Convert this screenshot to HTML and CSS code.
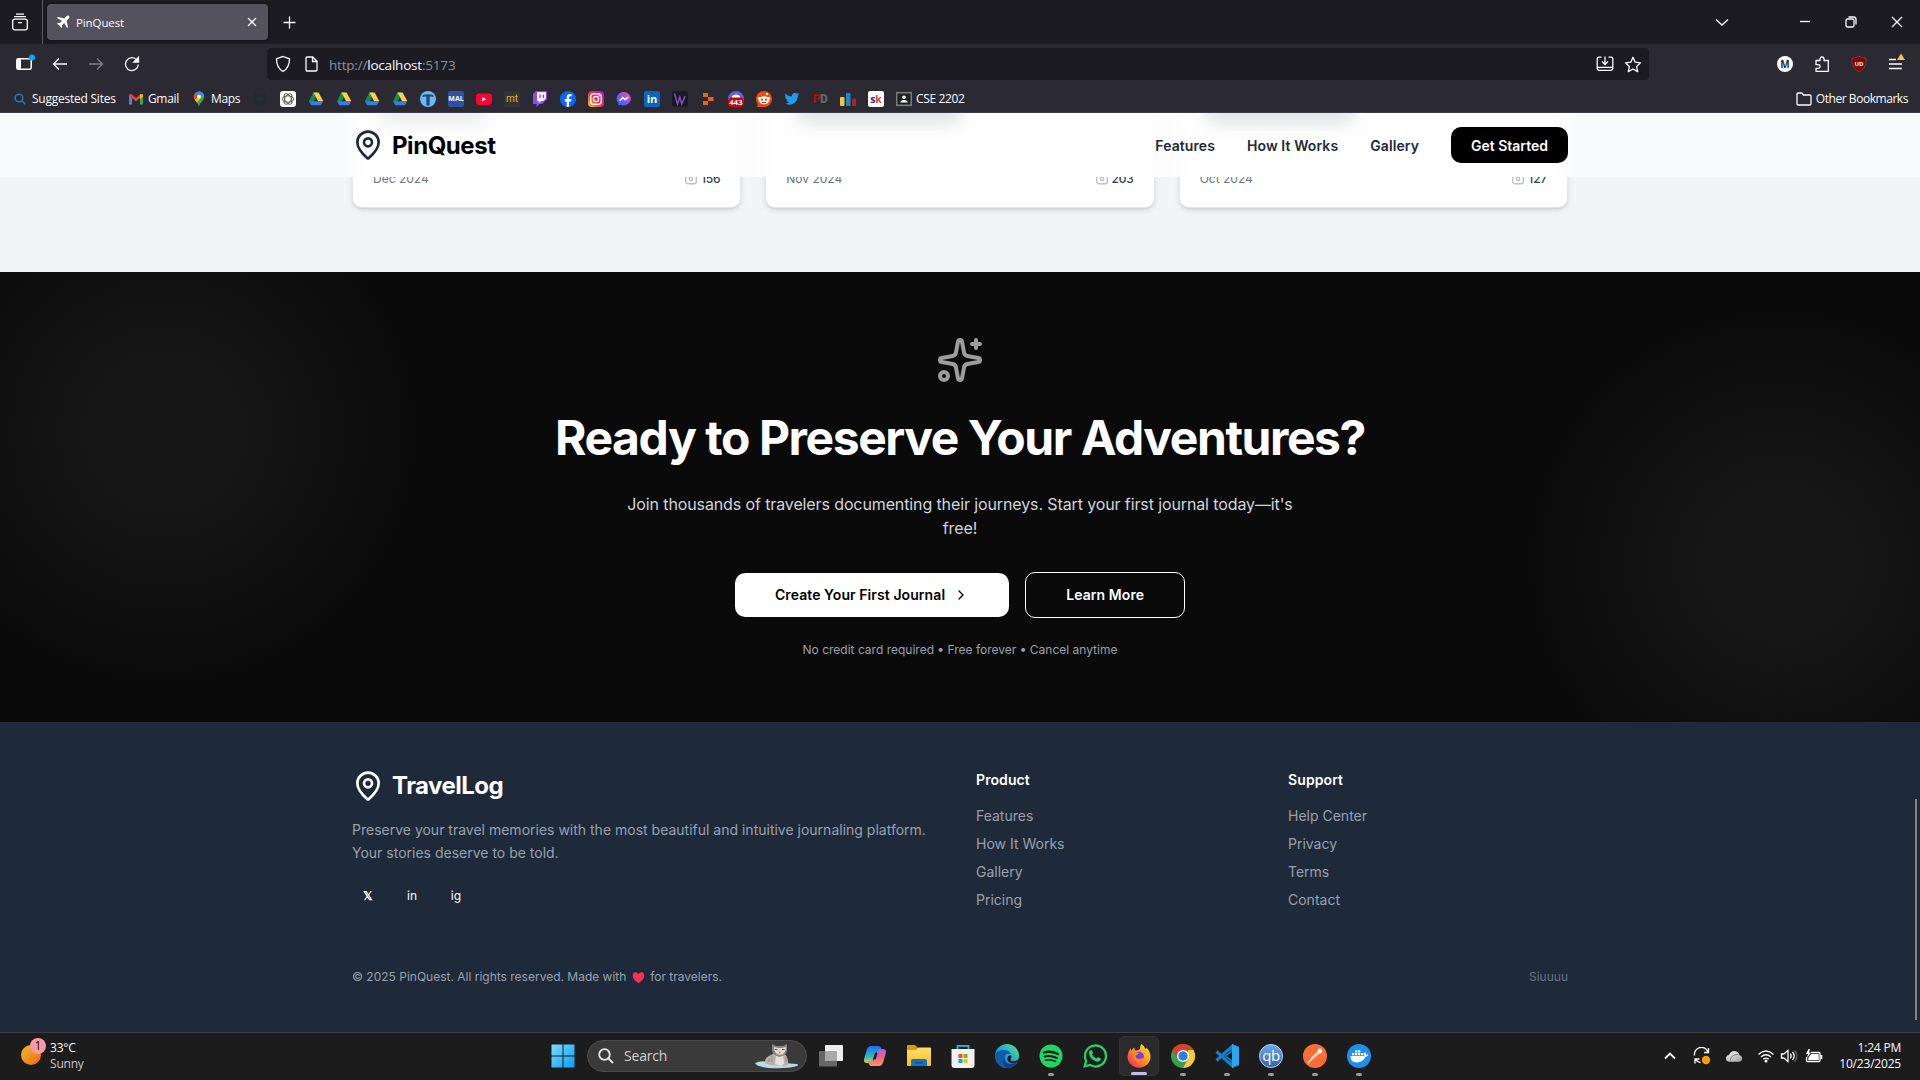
FILE: index.html
```html
<!DOCTYPE html>
<html lang="en">
<head>
<meta charset="utf-8">
<title>PinQuest</title>
<link rel="stylesheet" href="styles.css">
</head>
<body>
<svg class="defs" width="0" height="0" aria-hidden="true">
  <defs>
    <linearGradient id="g-win" x1="0" y1="0" x2="1" y2="1"><stop offset="0" stop-color="#7adcff"/><stop offset="1" stop-color="#0a9bf5"/></linearGradient>
    <linearGradient id="g-insta" x1="0" y1="1" x2="1" y2="0"><stop offset="0" stop-color="#ffd500"/><stop offset=".45" stop-color="#ff2a4d"/><stop offset="1" stop-color="#c800d8"/></linearGradient>
    <linearGradient id="g-msg" x1="0" y1="1" x2="1" y2="0"><stop offset="0" stop-color="#0a7cff"/><stop offset=".5" stop-color="#8a4dff"/><stop offset="1" stop-color="#ff5c87"/></linearGradient>
    <linearGradient id="g-edge" x1="0" y1="1" x2="1" y2="0"><stop offset="0" stop-color="#0c59a4"/><stop offset=".5" stop-color="#1fa2dc"/><stop offset="1" stop-color="#66eb6e"/></linearGradient>
    <linearGradient id="g-fox" x1="1" y1="0" x2="0" y2="1"><stop offset="0" stop-color="#fff04a"/><stop offset=".45" stop-color="#ff9a1f"/><stop offset="1" stop-color="#f5156c"/></linearGradient>
    <linearGradient id="g-sun" x1="0" y1="0" x2="1" y2="1"><stop offset="0" stop-color="#f7b733"/><stop offset="1" stop-color="#ee6a0c"/></linearGradient>
    <linearGradient id="g-folder" x1="0" y1="0" x2="0" y2="1"><stop offset="0" stop-color="#ffdf6b"/><stop offset="1" stop-color="#fcbb26"/></linearGradient>
    <linearGradient id="g-cop1" x1="0" y1="0" x2="0" y2="1"><stop offset="0" stop-color="#1b6ff0"/><stop offset=".6" stop-color="#26b9c9"/><stop offset="1" stop-color="#e8c63a"/></linearGradient>
    <linearGradient id="g-cop2" x1="0" y1="0" x2="0" y2="1"><stop offset="0" stop-color="#a65bf0"/><stop offset=".5" stop-color="#f0618f"/><stop offset="1" stop-color="#ff9a5c"/></linearGradient>
    <linearGradient id="g-qb" x1="0" y1="0" x2="0" y2="1"><stop offset="0" stop-color="#6fa9ea"/><stop offset="1" stop-color="#2f62b4"/></linearGradient>
    <linearGradient id="g-grey" x1="0" y1="0" x2="1" y2="1"><stop offset="0" stop-color="#f5f5f5"/><stop offset="1" stop-color="#a0a0a0"/></linearGradient>
    <symbol id="drive" viewBox="0 0 16 16">
      <path fill="#11a861" d="M5.4 1.6h3.2L3.5 10.700 1 10.800z"/>
      <path fill="#0f8f4f" d="M5.400 1.600 8 6.300 5.500 10.700H1z"/>
      <path fill="#ffcf48" d="M5.400 1.600h5.200L15.200 10H10z"/>
      <path fill="#ff4a3d" d="M10.200 10h5L12.900 14z"/>
      <path fill="#2d7ff9" d="M3.400 10.300h11.400L12.700 14.200H3.300L1.300 10.800z"/>
    </symbol>
    <symbol id="pin" viewBox="0 0 24 24">
      <path d="M20 10c0 4.993-5.539 10.193-7.399 11.799a1 1 0 0 1-1.202 0C9.539 20.193 4 14.993 4 10a8 8 0 0 1 16 0"/><circle cx="12" cy="10" r="3"/>
    </symbol>
    <symbol id="photo" viewBox="0 0 12 12">
      <rect x=".7" y=".7" width="10.600" height="10" rx="2"/><circle cx="6" cy="6" r="1.700"/>
    </symbol>
  </defs>
</svg>

<header class="tabs-bar">
  <div class="tab-overview"><svg class="line" width="16" height="18" viewBox="0 0 16 18"><rect x=".7" y="6.200" width="14.600" height="10.600" rx="2"/><path d="M2 3.700h12M4 1.200h8M6 9.700h4"/></svg></div>
  <div class="tab">
    <svg width="14" height="14" viewBox="0 0 14 14"><path fill="#fff" d="M13 1c-.7-.7-1.900-.4-2.600.3L8.300 3.400 2 2 1 3l5 2.700-2.200 2.400L1.800 8 1 8.800l2.600 1.600L5.200 13l.8-.8-.1-2L8.300 8 11 13l1-1-1.400-6.300 2.100-2.100C13.400 2.900 13.700 1.700 13 1z"/></svg>
    <span class="tab-title">PinQuest</span>
    <svg class="line" width="10" height="10" viewBox="0 0 10 10"><path d="M1 1l8 8M9 1L1 9"/></svg>
  </div>
  <svg class="line new-tab" width="13" height="13" viewBox="0 0 13 13"><path d="M6.500.5v12M.5 6.500h12"/></svg>
  <div class="window-buttons">
    <svg class="line" width="14" height="14" viewBox="0 0 14 14"><path d="M1 4.500l6 5.500 6-5.500"/></svg>
    <svg class="line" width="12" height="14" viewBox="0 0 12 14"><path d="M1 6.500h10"/></svg>
    <svg class="line" width="12" height="12" viewBox="0 0 12 12"><rect x="1" y="3" width="8" height="8" rx="1.500"/><path d="M3.500 1h5Q11 1 11 3.500v5"/></svg>
    <svg class="line" width="12" height="12" viewBox="0 0 12 12"><path d="M1 1l10 10M11 1L1 11"/></svg>
  </div>
</header>

<div class="toolbar">
  <div class="nav-buttons">
    <svg width="20" height="18" viewBox="0 0 20 18"><rect x=".8" y="4.800" width="14.400" height="10.400" rx="1.500" fill="none" stroke="#fff" stroke-width="1.500"/><path fill="#fff" d="M1 5h4v10H1z"/><circle cx="16" cy="3.500" r="3" fill="#00a8ff"/></svg>
    <svg class="line" width="16" height="14" viewBox="0 0 16 14"><path d="M15 7H1.500M7 1.500L1.500 7 7 12.500"/></svg>
    <svg class="line dim" width="16" height="14" viewBox="0 0 16 14"><path d="M1 7h13.500M9 1.500L14.500 7 9 12.500"/></svg>
    <svg class="line" width="16" height="16" viewBox="0 0 16 16"><path d="M14.300 8.500A6.400 6.400 0 1 1 12 3.200"/><path fill="#fff" d="M14.500 1.300V6H9.800z"/></svg>
  </div>
  <div class="url-bar">
    <svg class="line" width="16" height="18" viewBox="0 0 16 18"><path d="M8 1.500l6.500 2.300c0 6-1.500 10-6.500 12.700C3 13.800 1.500 9.800 1.500 3.800z"/></svg>
    <svg class="line" width="13" height="16" viewBox="0 0 13 16"><path d="M1 2.300Q1 1 2.300 1h5.500L12 5.200v8.500q0 1.300-1.300 1.300H2.300Q1 15 1 13.700zM7.500 1v4.500H12"/></svg>
    <span class="url">http://<b>localhost</b>:5173</span>
    <svg class="line url-end" width="18" height="16" viewBox="0 0 18 16"><path d="M5.500 1.200H3q-1.800 0-1.800 1.800v9.500q0 1.800 1.800 1.800h12q1.800 0 1.800-1.800V3q0-1.800-1.800-1.800h-2.500M1.200 11.300h15.600M9 .5v7.500M6 5.500l3 3 3-3"/></svg>
    <svg class="line" width="18" height="17" viewBox="0 0 18 17"><path stroke-linejoin="round" d="M9 1.300l2.200 4.900 5.300.6-3.900 3.600 1.100 5.200L9 13l-4.700 2.600 1.100-5.200L1.500 6.800l5.300-.6z"/></svg>
  </div>
  <div class="extensions">
    <span class="profile">M</span>
    <svg class="line" width="16" height="18" viewBox="0 0 16 18"><path stroke-linejoin="round" d="M2 5.500h4V4a2 2 0 0 1 4 0v1.500h4.300V16.300H2v-3h2.300a1.800 1.800 0 0 0 0-3.600H2z"/></svg>
    <span class="ublock"><svg width="16" height="18" viewBox="0 0 16 18"><path fill="#800000" stroke="#a34a4a" stroke-width=".6" d="M8 1c2 1.500 4 2 7 2 .2 7-.8 10-7 14C1.800 13 .8 10 1 3c3 0 5-.5 7-2z"/><text x="8" y="11" text-anchor="middle">UD</text></svg></span>
    <svg width="18" height="20" viewBox="0 0 18 20"><path stroke="#fff" stroke-width="1.400" d="M1 7.500h7M1 12h13M1 16.500h13"/><path fill="#ffbd4f" d="M13 1.500L17 8H9z"/></svg>
  </div>
</div>

<nav class="bookmarks">
  <span class="bookmark bm-sites"><svg width="16" height="16" viewBox="0 0 16 16" fill="none" stroke="#2179c9" stroke-width="1.500"><circle cx="7" cy="7" r="3.800"/><path d="M10 10l3.300 3.300"/></svg>Suggested Sites</span>
  <span class="bookmark bm-gmail"><svg width="16" height="16" viewBox="0 0 16 16"><path fill="#4285f4" d="M1 4v9.500h3V7z"/><path fill="#34a853" d="M15 4v9.500h-3V7z"/><path fill="#ea4335" d="M1 4.500Q1.300 2 4 3.500L8 7l4-3.500q2.700-1.500 3 1L8 10.500z"/><path fill="#fbbc04" d="M12 3.500q2.700-1.500 3 1v1L12 8z"/></svg>Gmail</span>
  <span class="bookmark bm-maps"><svg width="16" height="16" viewBox="0 0 16 16"><path fill="#34a853" d="M8 .5a5.200 5.200 0 0 1 5.200 5.200C13.200 9.500 9 11 8 15.500 7 11 2.800 9.500 2.800 5.700A5.200 5.200 0 0 1 8 .5z"/><path fill="#4285f4" d="M8 .5a5.200 5.200 0 0 1 4.700 3L8 9 6 2z"/><path fill="#fbbc04" d="M3.800 9L11 2l1.700 1.500L6 11.500z"/><path fill="#ea4335" d="M4 2.300L7 5 3.500 8.500A5.200 5.200 0 0 1 4 2.300z"/><path fill="#4285f4" d="M8 .5a5.200 5.200 0 0 1 4.700 3L9.500 7 4 2.300A5 5 0 0 1 8 .5z"/><circle cx="8" cy="5.700" r="1.900" fill="#fff"/></svg>Maps</span>
  <svg width="16" height="16" viewBox="0 0 16 16"><path fill="none" stroke="#24292e" stroke-width="2.500" d="M6 14.500v-2.700C3.500 11 3 8 4 5.500L3.800 3.200 6 4.200h4l2.200-1-.2 2.300c1 2.500.5 5.500-2 6.300v2.700"/></svg>
  <svg width="16" height="16" viewBox="0 0 16 16"><rect width="16" height="16" rx="3" fill="#fff"/><g fill="none" stroke="#444" stroke-width=".8"><ellipse cx="8" cy="8" rx="5.800" ry="3.200"/><ellipse cx="8" cy="8" rx="5.800" ry="3.200" transform="rotate(60 8 8)"/><ellipse cx="8" cy="8" rx="5.800" ry="3.200" transform="rotate(120 8 8)"/></g></svg>
  <svg width="16" height="16"><use href="#drive"/></svg>
  <svg width="16" height="16"><use href="#drive"/></svg>
  <svg width="16" height="16"><use href="#drive"/></svg>
  <svg width="16" height="16"><use href="#drive"/></svg>
  <svg width="16" height="16" viewBox="0 0 16 16"><circle cx="8" cy="8" r="8" fill="#6cb8f0"/><path fill="#1d4e7d" d="M2.500 4q5.500-1.500 11 0v2.300Q11.500 5.200 9.700 5.800v8L8 15l-1.700-1.200v-8Q4.500 5.200 2.500 6.300z"/></svg>
  <span class="fav fav-mal">MAL</span>
  <svg width="16" height="16" viewBox="0 0 16 16"><rect y="2.500" width="16" height="11.500" rx="3" fill="#f03"/><path fill="#fff" d="M6.300 6v4.500l4-2.250z"/></svg>
  <span class="fav fav-mt">mt</span>
  <svg width="16" height="16" viewBox="0 0 16 16"><path fill="#9146ff" d="M4 0L1 3v10h3.500v3l3-3h2.500l5-5V0z"/><path fill="#fff" d="M5 1.200h8.800v6.300l-2.500 2.500H9l-2.200 2.200V10H5z"/><path stroke="#9146ff" stroke-width="1.400" d="M8 3.500v3.700M11.300 3.500v3.700"/></svg>
  <svg width="16" height="16" viewBox="0 0 16 16"><circle cx="8" cy="8" r="8" fill="#0866ff"/><path fill="#fff" d="M6.700 16v-5.500H4.800V8h1.900V6.500c0-2.500 1.200-3.600 3.500-3.600l1.400.1v2.200h-1c-1.200 0-1.500.5-1.500 1.500V8h2.400l-.4 2.500h-2V16z"/></svg>
  <svg width="16" height="16" viewBox="0 0 16 16"><rect width="16" height="16" rx="4" fill="url(#g-insta)"/><g fill="none" stroke="#fff" stroke-width="1.400"><rect x="2.700" y="2.700" width="10.600" height="10.600" rx="3"/><circle cx="8" cy="8" r="2.600"/></g><circle cx="11.200" cy="4.800" r=".8" fill="#fff"/></svg>
  <svg width="16" height="16" viewBox="0 0 16 16"><path fill="url(#g-msg)" d="M8 1a7 6.700 0 1 1-3.500 12.600L2.300 14.500V12A7 6.700 0 0 1 8 1z"/><path fill="none" stroke="#fff" stroke-width="1.600" d="M3.800 9.700L6.700 6.600l2.600 2L12.200 6"/></svg>
  <span class="fav fav-in">in</span>
  <svg width="16" height="16" viewBox="0 0 16 16"><rect width="16" height="16" rx="3" fill="#1a1a1e"/><path fill="none" stroke="#7a4fc9" stroke-width="1.500" d="M2.500 2.500l3 10.500 2.300-7 2 7L13 5"/></svg>
  <svg width="16" height="16" viewBox="0 0 16 16"><path fill="#f26207" d="M3 2h5v4H3zM8 6h5.500v4H8zM3 10h5v4H3z"/></svg>
  <svg width="16" height="16" viewBox="0 0 16 16"><circle cx="8" cy="8" r="8" fill="#5865f2"/><path fill="#fff" d="M4 5q4-3 8 0v2H4z"/><rect y="6.500" width="16" height="9.500" rx="4" fill="#e00000"/><text class="badge-num" x="8" y="14.300" text-anchor="middle">443</text></svg>
  <svg width="16" height="16" viewBox="0 0 16 16"><circle cx="8" cy="8" r="8" fill="#ff4500"/><path fill="#ff4500" d="M2 12l-1 4h7z"/><ellipse cx="8" cy="9.200" rx="5.200" ry="4" fill="#fff"/><circle cx="3.200" cy="7.500" r="1.400" fill="#fff"/><circle cx="12.800" cy="7.500" r="1.400" fill="#fff"/><circle cx="11" cy="3" r="1.200" fill="#fff"/><circle cx="6" cy="8.700" r="1.100" fill="#e03c00"/><circle cx="10" cy="8.700" r="1.100" fill="#e03c00"/><path fill="none" stroke="#333" d="M6 11.200q2 1.200 4 0"/></svg>
  <svg width="16" height="16" viewBox="0 0 24 24"><path fill="#1d9bf0" d="M23 4.900c-.8.400-1.700.6-2.600.7.900-.6 1.600-1.400 2-2.500-.9.500-1.800.9-2.900 1.100a4.500 4.500 0 0 0-7.700 4.100C8 8.100 4.700 6.300 2.500 3.600a4.500 4.500 0 0 0 1.400 6c-.7 0-1.400-.2-2-.6 0 2.200 1.500 4.100 3.600 4.500-.6.200-1.300.2-2 .1.600 1.800 2.200 3.100 4.200 3.100A9 9 0 0 1 1 18.500 12.800 12.800 0 0 0 20.700 7.200c.9-.6 1.700-1.400 2.300-2.300z"/></svg>
  <span class="fav fav-pd"><i>P</i>D</span>
  <svg width="16" height="16" viewBox="0 0 16 16"><rect y="6" width="4.500" height="9" rx="1" fill="#f2c544"/><rect x="6" y="2" width="4.500" height="13" rx="1" fill="#1c87c9"/><rect x="12" y="7.500" width="4" height="7.500" rx="1" fill="#b3202a"/></svg>
  <span class="fav fav-sk">s<i>k</i></span>
  <span class="bookmark"><svg width="16" height="16" viewBox="0 0 16 16"><rect x=".7" y="1.700" width="14.600" height="12.600" fill="#202124" stroke="#77797c" stroke-width="1.600"/><circle cx="8" cy="6.300" r="1.800" fill="#fff"/><path fill="#fff" d="M4.300 11.500q0-2.500 3.700-2.500t3.700 2.500z"/></svg>CSE 2202</span>
  <span class="bookmark other"><svg class="line" width="16" height="14" viewBox="0 0 16 14"><path d="M1 2.300Q1 1 2.300 1h3.500l1.700 2h6.200Q15 3 15 4.300v7.400q0 1.300-1.300 1.300H2.300Q1 13 1 11.700z"/></svg>Other Bookmarks</span>
</nav>

<main class="page">
  <div class="scroll-thumb"></div>
  <nav class="site-nav">
    <i class="blurred-title title-1"></i><i class="blurred-title title-2"></i><i class="blurred-title title-3"></i>
    <div class="container nav-row">
      <a class="brand"><svg class="pin" width="32" height="32"><use href="#pin"/></svg><span>PinQuest</span></a>
      <div class="nav-links"><a>Features</a><a>How It Works</a><a>Gallery</a><a class="btn-start">Get Started</a></div>
    </div>
  </nav>

  <section class="journals">
    <div class="container card-grid">
      <article class="card"><span>Dec 2024</span><span class="count"><svg class="photo" width="12" height="12"><use href="#photo"/></svg>156</span></article>
      <article class="card"><span>Nov 2024</span><span class="count"><svg class="photo" width="12" height="12"><use href="#photo"/></svg>203</span></article>
      <article class="card"><span>Oct 2024</span><span class="count"><svg class="photo" width="12" height="12"><use href="#photo"/></svg>127</span></article>
    </div>
  </section>

  <section class="cta">
    <svg class="sparkles" width="48" height="48" viewBox="0 0 24 24"><path d="M11.017 2.814a1 1 0 0 1 1.966 0l1.051 5.558a2 2 0 0 0 1.594 1.594l5.558 1.051a1 1 0 0 1 0 1.966l-5.558 1.051a2 2 0 0 0-1.594 1.594l-1.051 5.558a1 1 0 0 1-1.966 0l-1.051-5.558a2 2 0 0 0-1.594-1.594l-5.558-1.051a1 1 0 0 1 0-1.966l5.558-1.051a2 2 0 0 0 1.594-1.594zM20 2v4M22 4h-4"/><circle cx="4" cy="20" r="2"/></svg>
    <h2>Ready to Preserve Your Adventures?</h2>
    <p class="lead">Join thousands of travelers documenting their journeys. Start your first journal today—it's free!</p>
    <div class="cta-buttons">
      <a class="btn-primary">Create Your First Journal<svg width="16" height="16" viewBox="0 0 24 24"><path d="M9 18l6-6-6-6"/></svg></a>
      <a class="btn-outline">Learn More</a>
    </div>
    <p class="note">No credit card required • Free forever • Cancel anytime</p>
  </section>

  <footer class="footer">
    <div class="container">
      <div class="footer-grid">
        <div class="about">
          <a class="brand"><svg class="pin" width="32" height="32"><use href="#pin"/></svg>TravelLog</a>
          <p>Preserve your travel memories with the most beautiful and intuitive journaling platform. Your stories deserve to be told.</p>
          <div class="social"><a class="social-x">𝕏</a><a>in</a><a>ig</a></div>
        </div>
        <div class="links"><h3>Product</h3><a>Features</a><a>How It Works</a><a>Gallery</a><a>Pricing</a></div>
        <div class="links"><h3>Support</h3><a>Help Center</a><a>Privacy</a><a>Terms</a><a>Contact</a></div>
      </div>
      <div class="legal">
        <p>© 2025 PinQuest. All rights reserved. Made with <svg class="heart" width="13" height="13" viewBox="0 0 14 13"><path fill="#f8315c" d="M7 12.700C3.500 10.300.7 7.600.7 4.300.7 2.200 2 .8 3.700.8 5.200.8 6.400 1.700 7 3 7.600 1.700 8.800.8 10.300.8c1.700 0 3 1.400 3 3.500 0 3.300-2.800 6-6.300 8.400z"/></svg> for travelers.</p>
        <span>Siuuuu</span>
      </div>
    </div>
  </footer>
</main>

<div class="taskbar">
  <div class="weather">
    <svg width="30" height="30" viewBox="0 0 30 30"><circle cx="12" cy="17" r="10" fill="url(#g-sun)"/><circle cx="19" cy="8" r="8" fill="#ff9aa2"/><text x="19" y="12" text-anchor="middle">1</text></svg>
    <div class="two-lines"><span>33°C</span><span class="muted">Sunny</span></div>
  </div>
  <div class="apps">
    <span class="app"><svg width="24" height="24" viewBox="0 0 24 24"><path fill="url(#g-win)" d="M.5.500h11v11H.5zM12.500.500h11v11h-11zM.5 12.500h11v11H.5zM12.500 12.500h11v11h-11z"/></svg></span>
    <div class="search">
      <svg width="16" height="16" viewBox="0 0 16 16" fill="none" stroke="#e6e6e6" stroke-width="1.800"><circle cx="6.500" cy="6.500" r="5.300"/><path d="M10.500 10.500l4.500 4.500"/></svg>
      <span>Search</span>
      <svg class="snow-cat" width="44" height="26" viewBox="0 0 44 26"><path fill="#b9d9e8" d="M0 20q6-3 14-1l28 2q2 1 0 2-10 3-28 2Q2 24 0 20z"/><path fill="#b9b0aa" d="M10 20q-1-6 8-9l3-1h8q5 5 4 12l-4 1-14-1z"/><path fill="#e8e1da" d="M21 12h7l1 9-3 2-6-2z"/><path fill="#8b8580" d="M17 1l4 2h7l4-2v6q0 5-7.500 7Q17 12 17 7z"/><path fill="#e0d9d2" d="M19 4l4 1h4l4-1q0 7-6 8-6-1-6-8z"/><path stroke="#5a5450" d="M20 6.500h2.500M27 6.500h2.500"/><circle cx="24.700" cy="9.500" r="1" fill="#d77a72"/><path stroke="#8b8580" stroke-width=".8" d="M14 15v4M17 13v6M31 14v5"/></svg>
    </div>
    <span class="app"><svg width="24" height="24" viewBox="0 0 24 24"><rect x="6" y="1" width="18" height="16" rx="1" fill="#eee"/><rect y="7" width="18" height="15.500" rx="1" fill="#707070" opacity=".9"/><rect x="6" y="7" width="12" height="10" fill="#a9a9a9"/></svg></span>
    <span class="app"><svg width="24" height="24" viewBox="0 0 24 24"><path fill="url(#g-cop1)" d="M8 2h7.500q2 0 2.700 2.200L19 7h-3.500Q13 7 12.200 9.500l-2 6.500Q9.300 19 6.500 19H4q-4 0-2.800-4.500l2.500-8.500Q5 2 8 2z"/><path fill="url(#g-cop2)" d="M16 22H8.500q-2 0-2.700-2.200L5 17h3.500q2.500 0 3.300-2.500l2-6.500q.9-3 3.700-3H20q4 0 2.800 4.500L20.300 18q-1.300 4-4.300 4z"/><path fill="#1c1c1c" d="M12 9h2.500l-1.800 6.300H10z"/></svg></span>
    <span class="app"><svg width="24" height="24" viewBox="0 0 24 24"><path fill="#d99a0b" d="M0 2q0-1 1-1h7l3 3v4H0z"/><path fill="url(#g-folder)" d="M0 6h9l2.500-2.500H23q1 0 1 1V21q0 1-1 1H1q-1 0-1-1z"/><path fill="#1173c4" d="M4 22v-5q0-2 2-2h12q2 0 2 2v5z"/><path stroke="#0a569b" stroke-width="1.500" d="M8 18.700h8"/></svg></span>
    <span class="app"><svg width="24" height="24" viewBox="0 0 24 24"><path fill="none" stroke="#28b4f0" stroke-width="1.800" d="M6.500 6V1.800h11V6"/><path fill="#f1f1f1" d="M.5 5h23v16q0 3-3 3h-17q-3 0-3-3z"/><path fill="#f25022" d="M7.500 10h4v4h-4z"/><path fill="#7fba00" d="M12.500 10h4v4h-4z"/><path fill="#00a4ef" d="M7.500 15h4v4h-4z"/><path fill="#ffb900" d="M12.500 15h4v4h-4z"/></svg></span>
    <span class="app"><svg width="24" height="24" viewBox="0 0 24 24"><circle cx="12" cy="12" r="12" fill="url(#g-edge)"/><path fill="#0f5ba8" d="M0 11q3-5 9-5 5 0 7 4-6-1-6.500 4 0 6 7 6 3 0 5.500-1.500Q18 24 12 24 1 23 0 11z"/><path fill="#123f80" d="M9.500 13q-1 7 6.500 7 3 0 6-1.500Q18 24 12 24 6 21 9.500 13z"/><path fill="#1c1c1c" d="M13.500 12q3-2 3 1-2 3 0 4 4 1 7.500-2-1 3-2.500 3.500Q16 21 13 17q-1.500-3 .5-5z"/></svg></span>
    <span class="app open"><svg width="24" height="24" viewBox="0 0 24 24"><circle cx="12" cy="12" r="11.500" fill="#1ed760"/><g fill="none" stroke="#1c1c1c" stroke-linecap="round"><path stroke-width="2.300" d="M5 8.500q7-2 14 1.500"/><path stroke-width="2" d="M5.700 12.500q6-1.700 12 1.500"/><path stroke-width="1.600" d="M6.500 16.200q5-1.400 10 1.200"/></g></svg></span>
    <span class="app"><svg width="24" height="24" viewBox="0 0 24 24"><path fill="none" stroke="#25d366" stroke-width="2.200" d="M1.700 22.300l1.500-5.500A10.500 10.500 0 1 1 7 20.900z"/><path fill="#25d366" d="M7 6.500q1-1 2 0l1 2.400q0 .6-1 1.500 1.500 2.900 4.500 4 1-1.400 1.700-1.200l2.300 1.100q.7.500 0 2-1.200 1.700-3.500 1.400Q7.500 16 6 10q-.3-2.300 1-3.500z"/></svg></span>
    <span class="app open active"><svg width="24" height="24" viewBox="0 0 24 24"><path fill="url(#g-fox)" d="M14.500 0q3 2 4 5 1-.5 1-1.500 4 4.500 4 9.500a11.500 10.700 0 0 1-23 0Q.7 8 3.500 4q.2 2 1 2.500Q6 4 7.500 3.500q-.5 2 1 3 3 0 4.500-1.500-.5-3 1.500-5z"/><circle cx="12" cy="12.700" r="5" fill="#7a3fe0"/><path fill="#ff8a16" d="M5.500 8q3 .5 6.500 1-1.500 2-3.500 2.500 0 3.500 4 3.500 2.500 0 4.500-2-1 5-6 5-5.500-1-5.500-10z"/></svg></span>
    <span class="app open"><svg width="24" height="24" viewBox="0 0 24 24"><circle cx="12" cy="12" r="12" fill="#34a348"/><path fill="#e33b2e" d="M1.600 6a12 12 0 0 1 20.800 0H12v6l-5 3z"/><path fill="#fcc934" d="M22.400 6A12 12 0 0 1 12 24l5.200-9L17 6z"/><circle cx="12" cy="12" r="6" fill="#fff"/><circle cx="12" cy="12" r="4.700" fill="#2f7bea"/></svg></span>
    <span class="app open"><svg width="24" height="24" viewBox="0 0 24 24"><path fill="none" stroke="#1180c8" stroke-width="3.200" d="M1.500 16.500L17 2.500v4M1.500 7.500L17 21.500v-4"/><path fill="#2aa5ee" d="M17 0l7 3v18l-7 3z"/><path fill="#1180c8" d="M17 6v12l-8-6z"/><path fill="#1c1c1c" d="M17 8v8l-5.500-4z"/></svg></span>
    <span class="app open"><svg width="24" height="24" viewBox="0 0 24 24"><circle cx="12" cy="12" r="11.500" fill="url(#g-qb)" stroke="#b9d4f4"/><text class="qb" x="12" y="17" text-anchor="middle">qb</text></svg></span>
    <span class="app open"><svg width="24" height="24" viewBox="0 0 24 24"><circle cx="12" cy="12" r="12" fill="#ff6c37"/><path fill="none" stroke="#fff" stroke-width="2.400" d="M15.500 8.500L9 14.500"/><path stroke="#fff" stroke-width="1.300" d="M10 13.500L5 19"/><circle cx="16.800" cy="7" r="2.400" fill="#fff"/><path stroke="#ff6c37" stroke-width=".7" d="M8.500 15l7-6.500"/></svg></span>
    <span class="app open"><svg width="24" height="24" viewBox="0 0 24 24"><circle cx="12" cy="12" r="12" fill="#1d8fee"/><path fill="#fff" d="M3.500 12H17q-.5-2.500 1-4 1.200 1 1.300 2.500 1.500-.2 2.200.5-1 1.700-3 1.800Q16 18.500 9.500 18.500q-6 0-6-6.500zM5 9h2.300v2.300H5zM8 9h2.300v2.300H8zM11 9h2.300v2.300H11zM14 9h2.300v2.300H14zM8 6.300h2.300v2.200H8zM11 6.300h2.300v2.200H11z"/></svg></span>
  </div>
  <div class="tray">
    <svg class="line bold" width="14" height="10" viewBox="0 0 14 10"><path d="M2 7.500l5-5 5 5"/></svg>
    <svg class="line" width="18" height="18" viewBox="0 0 18 18"><path d="M1.500 8.500A7 7 0 0 1 15 5M15.500 1v4.500H11M7.500 15.700Q4.500 15 2.500 12.500M2 16.500V12h4.500"/><circle cx="13" cy="13" r="4.200" fill="#ff9a00" stroke="none"/></svg>
    <svg width="18" height="12" viewBox="0 0 18 12"><path fill="url(#g-grey)" d="M4 11.700Q1 11.500 1 8.300 1.200 5.300 4 5 5.500 1 9.500 1q3.700.3 5 4 2.700.7 2.700 3.300 0 3-3 3.400z"/><path fill="none" stroke="#888" d="M5 11q1-7 8.500-6.500"/></svg>
    <svg class="line" width="18" height="14" viewBox="0 0 18 14"><path d="M1.500 5.500Q9-1.500 16.500 5.500M4 8q5-4.500 10 0M6.300 10.300q2.700-2.300 5.400 0"/><circle cx="9" cy="12" r="1.500" fill="#fff" stroke="none"/></svg>
    <svg class="line" width="18" height="14" viewBox="0 0 18 14"><path d="M1.500 5h2.300L8 1.500v11L3.800 9H1.500zM10.300 4.700q1.700 2.300 0 4.600M12.500 3q3.300 4 0 8"/><path stroke="#666" d="M14.700 1.500q4.300 5.500 0 11"/></svg>
    <svg class="line" width="18" height="14" viewBox="0 0 18 14"><path d="M6 3.500h8q1 0 1 1v7q0 1-1 1H2.500q-1 0-1-1V8"/><path fill="#fff" stroke="none" d="M6 5h7.700v6H3.300V9zM15.500 6h1.800v4h-1.800zM3.500 0L1 5h2l-1 4 4-5.500H4L5 0z"/></svg>
    <div class="two-lines clock"><span>1:24 PM</span><span>10/23/2025</span></div>
  </div>
</div>
</body>
</html>
```
FILE: styles.css
```css
* { box-sizing: border-box; margin: 0; padding: 0; }
body {
  width: 1920px;
  height: 1080px;
  overflow: hidden;
  display: flex;
  flex-direction: column;
  background: #1c1b22;
  color: #fbfbfe;
  font: 12px/16px "Open Sans", "Noto Sans", sans-serif;
}
svg { display: block; flex: none; }
.defs { position: absolute; }
.line { fill: none; stroke: #fbfbfe; stroke-width: 1.3; }
.dim { opacity: .4; }
.bold { stroke-width: 1.8; }

/* Browser window */
.tabs-bar { height: 44px; display: flex; align-items: center; background: #1c1b22; }
.tab-overview { width: 43px; height: 44px; padding-left: 12px; display: flex; align-items: center; border-right: 1px solid #5b5a63; }
.tab {
  width: 221px; height: 36px; margin-left: 4px; padding: 0 11px 0 9px;
  display: flex; align-items: center; gap: 6px;
  background: #53525d; border-radius: 4px; box-shadow: 0 0 3px #000a;
}
.tab-title { flex: 1; padding-top: 1px; font-size: 11.500px; letter-spacing: -.1px; }
.new-tab { margin-left: 15px; }
.window-buttons { margin-left: auto; padding-right: 17px; display: flex; align-items: center; }
.window-buttons svg:nth-child(1) { margin-right: 70px; }
.window-buttons svg:nth-child(2), .window-buttons svg:nth-child(3) { margin-right: 34px; }

.toolbar { height: 40px; display: flex; align-items: center; background: #2b2a33; }
.nav-buttons { width: 267px; padding-left: 16px; display: flex; align-items: center; }
.nav-buttons svg:nth-child(1) { margin: 0 16px 3px 0; }
.nav-buttons svg:nth-child(2), .nav-buttons svg:nth-child(3) { margin-right: 20px; }
.url-bar {
  width: 1382px; height: 32px; padding: 0 7px 0 8px;
  display: flex; align-items: center; background: #1c1b22; border-radius: 4px;
}
.url { margin: 2px 0 0 11px; font-size: 13.500px; color: #8f8f98; letter-spacing: -.2px; }
.url-bar svg:nth-child(2) { margin-left: 14px; }
.url b { font-weight: 400; color: #fbfbfe; }
.url-end { margin: 0 10px 0 auto; }
.extensions { margin-left: auto; padding-right: 14px; display: flex; align-items: center; gap: 21px; }
.profile { width: 16px; height: 16px; border-radius: 50%; background: #fff; color: #2b2a33; font: 700 10px/16px "Open Sans", sans-serif; text-align: center; }
.extensions > svg:last-child { margin-bottom: 4px; }
.ublock text { font: 700 6px "Open Sans", sans-serif; fill: #fff; }

.bookmarks { height: 29px; padding: 1px 12px 0; display: flex; align-items: center; gap: 12px; background: #2b2a33; border-bottom: 1px solid #3d3b45; }
.bookmark { display: flex; align-items: center; gap: 4px; white-space: nowrap; font-size: 12px; letter-spacing: -.35px; }
.bm-sites { width: 104px; letter-spacing: -.24px; }
.bm-gmail { width: 51px; }
.bm-maps { width: 49px; }
.other { margin-left: auto; letter-spacing: -.45px; }
.fav { width: 16px; height: 16px; border-radius: 2px; font: 700 9px/16px "Open Sans", sans-serif; text-align: center; overflow: hidden; }
.fav i { font-style: normal; }
.fav-mal { background: #2e51a2; font-size: 7px; }
.fav-mt { background: #323437; color: #e2b714; font: 10px/15px Roboto, sans-serif; }
.fav-in { background: #0a66c2; font-size: 11px; line-height: 15px; }
.fav-pd { font: 900 12px/16px Roboto, sans-serif; color: #666; letter-spacing: -.5px; }
.fav-pd i { color: #a11212; }
.fav-sk { background: #fff; color: #2a2a86; font-size: 10.500px; }
.fav-sk i { color: #e5432d; }
.badge-num { font: 700 7.500px "Open Sans", sans-serif; fill: #fff; }

/* Site */
.page { height: 919px; position: relative; background: #f3f4f6; color: #fff; font-family: Inter, sans-serif; display: flex; flex-direction: column; }
.scroll-thumb { position: absolute; right: 3px; top: 686px; width: 2px; height: 221px; background: #858585; }
.container { width: 1216px; margin: 0 auto; }
.site-nav {
  position: relative;
  height: 64px;
  overflow: hidden;
  background: linear-gradient(90deg, #f9fafb 340px, #fff 370px, #fff 725px, #fcfcfd 753px, #fff 780px, #fff 1140px, #fcfcfd 1167px, #fff 1195px, #fff 1550px, #f9fafb 1580px);
}
/* Card titles seen through the frosted bar */
.blurred-title { position: absolute; top: -8px; height: 18px; background: #8b9095; opacity: .3; filter: blur(9px); }
.title-1 { left: 380px; width: 105px; opacity: .2; }
.title-2 { left: 797px; width: 163px; }
.title-3 { left: 1206px; width: 148px; }
.nav-row { position: relative; height: 64px; display: flex; align-items: center; justify-content: space-between; }
.brand { display: flex; align-items: center; gap: 8px; font-size: 24px; line-height: 32px; font-weight: 700; letter-spacing: -.52px; }
.site-nav .brand { color: #000; letter-spacing: -.45px; }
.site-nav .brand span { padding-top: 1px; }
.pin { fill: none; stroke: currentColor; stroke-width: 2; stroke-linecap: round; stroke-linejoin: round; }
.site-nav .pin { color: #1e2939; }
.nav-links { display: flex; align-items: center; gap: 32px; font-size: 14px; font-weight: 600; color: #1e2939; letter-spacing: .09px; }
.nav-links a { padding-top: 1px; }
.nav-links .btn-start { height: 36px; padding: 1px 20px 0; line-height: 36px; border-radius: 10px; background: #000; color: #fff; letter-spacing: 0; }

.journals { height: 95px; overflow: hidden; display: flex; align-items: flex-end; padding-bottom: 64px; }
.card-grid { display: grid; grid-template-columns: repeat(3, 1fr); gap: 24px; }
.card {
  height: 160px; margin-top: -129px; padding: 0 20px 20px; display: flex; align-items: flex-end; justify-content: space-between;
  background: #fff; border: 1px solid #e5e7eb; border-radius: 10px; box-shadow: 0 3px 6px -1px #0002, 0 2px 3px -2px #0002;
  color: #6a7282; font-size: 12px; line-height: 16px;
}
.count { display: flex; align-items: center; gap: 4px; color: #364153; font-weight: 500; letter-spacing: -.2px; }
.photo { fill: none; stroke: #bcc0c7; stroke-width: 1.400; }

.cta {
  height: 450px; padding-top: 64px; display: flex; flex-direction: column; align-items: center; text-align: center;
  background:
    radial-gradient(circle at 165px 160px, #171717 0, #161616 70px, #17171700 260px),
    radial-gradient(circle at 1780px 290px, #171717 0, #161616 70px, #17171700 260px),
    #0a0a0a;
}
.sparkles { fill: none; stroke: #9d9d9d; stroke-width: 2; stroke-linecap: round; stroke-linejoin: round; }
.cta h2 { margin-top: 24px; font-size: 48px; line-height: 60px; font-weight: 700; letter-spacing: -1.430px; }
.lead { width: 674px; margin-top: 24px; font-size: 16px; line-height: 24px; color: #d1d5dc; letter-spacing: -.115px; }
.cta-buttons { margin-top: 32px; display: flex; align-items: center; gap: 16px; font-size: 14px; line-height: 20px; font-weight: 600; letter-spacing: .08px; }
.btn-primary { height: 44px; padding: 0 40px; display: flex; align-items: center; gap: 8px; background: #fff; color: #000; border-radius: 10px; }
.btn-primary svg { fill: none; stroke: #000; stroke-width: 2; stroke-linecap: round; stroke-linejoin: round; }
.btn-outline { height: 46px; padding: 12px 40px; border: 1px solid #fff; border-radius: 10px; }
.note { margin-top: 24px; font-size: 12px; line-height: 16px; color: #99a1af; }

.footer { flex: 1; padding-top: 48px; background: #1e2939; }
.footer-grid { display: grid; grid-template-columns: repeat(4, 280px); gap: 32px; }
.about { grid-column: span 2; }
.about p { margin: 17px 0 15px; font-size: 14px; line-height: 22.750px; color: #99a1af; }
.social { display: flex; gap: 12px; font-size: 12px; line-height: 32px; text-align: center; }
.social a { width: 32px; }
.social-x { font-weight: 600; }
.links { display: flex; flex-direction: column; gap: 8px; font-size: 14px; line-height: 20px; color: #99a1af; }
.links h3 { margin-bottom: 8px; font-size: 14px; font-weight: 600; color: #fff; letter-spacing: .1px; }
.legal { margin-top: 57px; display: flex; justify-content: space-between; font-size: 12px; line-height: 16px; color: #99a1af; }
.legal span { color: #6a7282; }
.heart { display: inline-block; margin: 0 2px; vertical-align: -3px; }

/* Desktop taskbar */
.taskbar { height: 48px; display: grid; grid-template-columns: 541px 1fr 300px; background: #1c1c1c; border-top: 1px solid #3e3e3e; }
.two-lines { display: flex; flex-direction: column; font-size: 12px; line-height: 16px; letter-spacing: -.2px; }
.muted { color: #c5c5c5; }
.weather { padding: 5px 0 0 19px; display: flex; gap: 1px; }
.weather text { font: 12px "Open Sans", sans-serif; fill: #111; }
.weather .two-lines { padding-top: 2px; }
.apps { display: flex; align-items: center; padding-bottom: 1px; }
.app { position: relative; width: 44px; height: 40px; display: flex; align-items: center; justify-content: center; }
.active { width: 40px; margin: 0 2px; background: #2b2b2b; border: 1px solid #333; border-radius: 5px; }
.open::after { content: ""; position: absolute; bottom: 0; left: calc(50% - 3px); width: 6px; height: 3px; border-radius: 2px; background: #9a9a9a; }
.active::after { width: 16px; left: calc(50% - 8px); background: #c3bbec; }
.search { width: 220px; height: 32px; margin: 0 2px; padding: 0 7px 0 10px; display: flex; align-items: center; gap: 10px; border-radius: 16px; background: #3a3a3a; border: 1px solid #4b4b4b; font-size: 14px; color: #d0d0d0; }
.search span { flex: 1; letter-spacing: -.2px; }
.qb { font: 15px "Open Sans", sans-serif; fill: #fff; letter-spacing: -.5px; }
.tray { display: flex; align-items: center; justify-content: flex-end; padding: 0 19px 1px 0; }
.tray svg:nth-child(1) { margin-right: 16px; }
.tray svg:nth-child(2), .tray svg:nth-child(3) { margin-right: 14px; }
.tray svg:nth-child(4) { margin-right: 5px; }
.tray svg:nth-child(5) { margin-right: 7px; }
.clock { width: 78px; text-align: right; }
```
